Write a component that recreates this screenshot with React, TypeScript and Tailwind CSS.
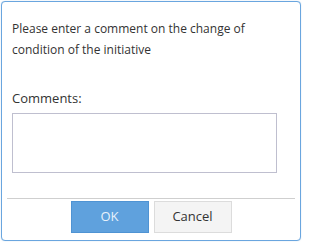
export default function App() {
  return (
    <div className="w-[302px] h-[242px] bg-white p-px font-['Open_Sans',sans-serif] text-[#333]">
      <div className="w-[300px] h-[240px] rounded-[4px] border border-[#6aa6df] bg-white shadow-[0_0_1px_rgba(91,155,213,0.5)] flex flex-col">
        <div className="px-[10px] pt-[16px]">
          <p className="text-[12px] leading-[21px]">
            Please enter a comment on the change of condition of the initiative
          </p>
          <label className="block mt-[28px] text-[13px] leading-[20px]">Comments:</label>
          <textarea className="block mt-[5px] w-[265px] h-[60px] border border-[#bfbfcf] resize-none outline-none" />
        </div>
        <div className="mx-[5px] mt-[25px] h-px bg-[#cfcfcf]" />
        <div className="mt-[2px] flex justify-center gap-[5px]">
          <button className="w-[78px] h-[32px] bg-[#5fa1dd] border border-[#4f93d3] text-[13px] text-[#e8f1fb]">
            OK
          </button>
          <button className="w-[78px] h-[32px] bg-[#f4f4f4] border border-[#dcdcdc] text-[13px] text-[#333]">
            Cancel
          </button>
        </div>
      </div>
    </div>
  );
}
